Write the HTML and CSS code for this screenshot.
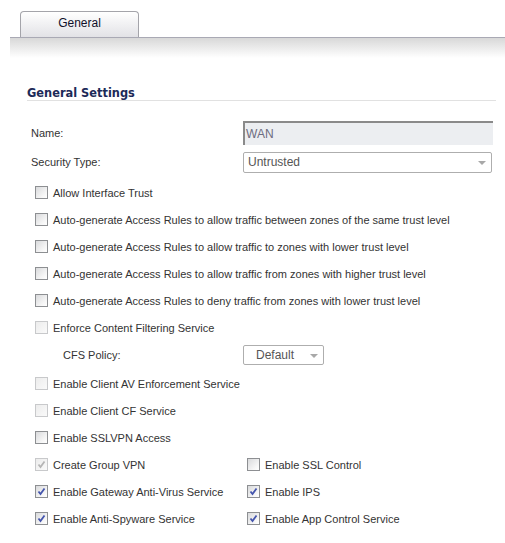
FILE: index.html
```html
<!DOCTYPE html>
<html>
<head>
<meta charset="utf-8">
<link rel="stylesheet" href="styles.css">
</head>
<body>
<div class="tabs">
  <div class="tab">General</div>
</div>
<div class="bar"></div>
<div class="section">
  <div class="heading">General Settings</div>
  <div class="form">
    <div class="row row-name">
      <div class="label">Name:</div>
      <div class="input">WAN</div>
    </div>
    <div class="row row-sec">
      <div class="label">Security Type:</div>
      <div class="select wide"><span>Untrusted</span><i class="arrow"></i></div>
    </div>
    <div class="row chk"><span class="cb"></span><span class="txt">Allow Interface Trust</span></div>
    <div class="row chk"><span class="cb"></span><span class="txt">Auto-generate Access Rules to allow traffic between zones of the same trust level</span></div>
    <div class="row chk"><span class="cb"></span><span class="txt">Auto-generate Access Rules to allow traffic to zones with lower trust level</span></div>
    <div class="row chk"><span class="cb"></span><span class="txt">Auto-generate Access Rules to allow traffic from zones with higher trust level</span></div>
    <div class="row chk"><span class="cb"></span><span class="txt">Auto-generate Access Rules to deny traffic from zones with lower trust level</span></div>
    <div class="row chk"><span class="cb dis"></span><span class="txt">Enforce Content Filtering Service</span></div>
    <div class="row row-cfs">
      <div class="label sub">CFS Policy:</div>
      <div class="select small"><span>Default</span><i class="arrow"></i></div>
    </div>
    <div class="row chk gap"><span class="cb dis"></span><span class="txt">Enable Client AV Enforcement Service</span></div>
    <div class="row chk"><span class="cb dis"></span><span class="txt">Enable Client CF Service</span></div>
    <div class="row chk"><span class="cb"></span><span class="txt">Enable SSLVPN Access</span></div>
    <div class="row two">
      <div class="col"><span class="cb dis on"><svg viewBox="0 0 11 11"><path d="M2.5 5.5 L4.5 8 L8.5 2.5"/></svg></span><span class="txt">Create Group VPN</span></div>
      <div class="col"><span class="cb"></span><span class="txt">Enable SSL Control</span></div>
    </div>
    <div class="row two">
      <div class="col"><span class="cb on"><svg viewBox="0 0 11 11"><path d="M2.5 5.5 L4.5 8 L8.5 2.5"/></svg></span><span class="txt">Enable Gateway Anti-Virus Service</span></div>
      <div class="col"><span class="cb on"><svg viewBox="0 0 11 11"><path d="M2.5 5.5 L4.5 8 L8.5 2.5"/></svg></span><span class="txt">Enable IPS</span></div>
    </div>
    <div class="row two">
      <div class="col"><span class="cb on"><svg viewBox="0 0 11 11"><path d="M2.5 5.5 L4.5 8 L8.5 2.5"/></svg></span><span class="txt">Enable Anti-Spyware Service</span></div>
      <div class="col"><span class="cb on"><svg viewBox="0 0 11 11"><path d="M2.5 5.5 L4.5 8 L8.5 2.5"/></svg></span><span class="txt">Enable App Control Service</span></div>
    </div>
  </div>
</div>
</body>
</html>
```
FILE: styles.css
```css
html, body {
  margin: 0;
  padding: 0;
  background: #fff;
}
body {
  font-family: "Liberation Sans", Arial, sans-serif;
  font-size: 11px;
  color: #333;
  width: 505px;
  height: 543px;
  overflow: hidden;
}
.tabs {
  padding: 11px 0 0 20px;
  height: 37px;
  box-sizing: border-box;
  display: flex;
  align-items: flex-end;
}
.tab {
  width: 119px;
  height: 26px;
  border: 1px solid #a4a4aa;
  border-bottom: none;
  border-radius: 4px 4px 0 0;
  background: linear-gradient(#ffffff, #e2e2e6);
  font-size: 12px;
  color: #10102a;
  display: flex;
  align-items: center;
  justify-content: center;
  padding-bottom: 3px;
  box-sizing: border-box;
}
.bar {
  margin-left: 10px;
  height: 20px;
  border-top: 1px solid #a9a9b4;
  background: linear-gradient(#d8d8d8, #ffffff);
}
.section {
  margin-left: 27px;
  width: 469px;
}
.heading {
  margin-top: 28px;
  font-family: "DejaVu Sans", Verdana, sans-serif;
  font-weight: bold;
  font-size: 11.4px;
  color: #1c2a58;
  height: 14px;
  line-height: 14px;
  border-bottom: 1px solid #e1e1e1;
}
.form {
  margin-top: 20px;
}
.row {
  display: flex;
  align-items: center;
}
.row-name { height: 24px; }
.row-sec { height: 34px; }
.row-cfs { height: 27px; }
.chk { height: 27px; padding-left: 8px; }
.gap { margin-top: 2px; }
.two { height: 27px; padding-left: 8px; }
.col {
  display: flex;
  align-items: center;
}
.col:first-child { width: 212px; }
.label {
  width: 212px;
  padding-left: 4px;
}
.label.sub {
  padding-left: 36px;
  width: 180px;
}
.input {
  width: 247px;
  height: 22px;
  border-top: 2px solid #8a8a8a;
  border-left: 2px solid #8a8a8a;
  background: #eceef1;
  color: #6c6c80;
  font-size: 12px;
  display: flex;
  align-items: center;
  padding-left: 1px;
}
.select {
  height: 19px;
  border: 1px solid #aeaeae;
  border-radius: 2px;
  background: #fff;
  color: #555;
  font-size: 12px;
  display: flex;
  align-items: center;
  position: relative;
}
.select.wide {
  width: 249px;
  padding-left: 4px;
  box-sizing: border-box;
  height: 21px;
}
.select.small {
  width: 81px;
  height: 20px;
  box-sizing: border-box;
  padding-left: 12px;
}
.arrow {
  position: absolute;
  right: 5px;
  top: 8px;
  width: 0;
  height: 0;
  border-left: 4px solid transparent;
  border-right: 4px solid transparent;
  border-top: 4px solid #a8a8a8;
}
.cb {
  width: 11px;
  height: 11px;
  border: 1px solid #8d8f92;
  background: linear-gradient(135deg, #d9dadc, #f6f6f6 70%, #ffffff);
  margin-right: 5px;
  flex: none;
  display: flex;
  align-items: center;
  justify-content: center;
}
.cb.dis {
  border-color: #c8c9cb;
  background: linear-gradient(135deg, #ececec, #fafafa);
}
.cb svg {
  width: 11px;
  height: 11px;
}
.cb svg path {
  fill: none;
  stroke: #4455ad;
  stroke-width: 1.8;
}
.cb.dis svg path {
  stroke: #b5b5b5;
}
.txt {
  white-space: nowrap;
}
```
